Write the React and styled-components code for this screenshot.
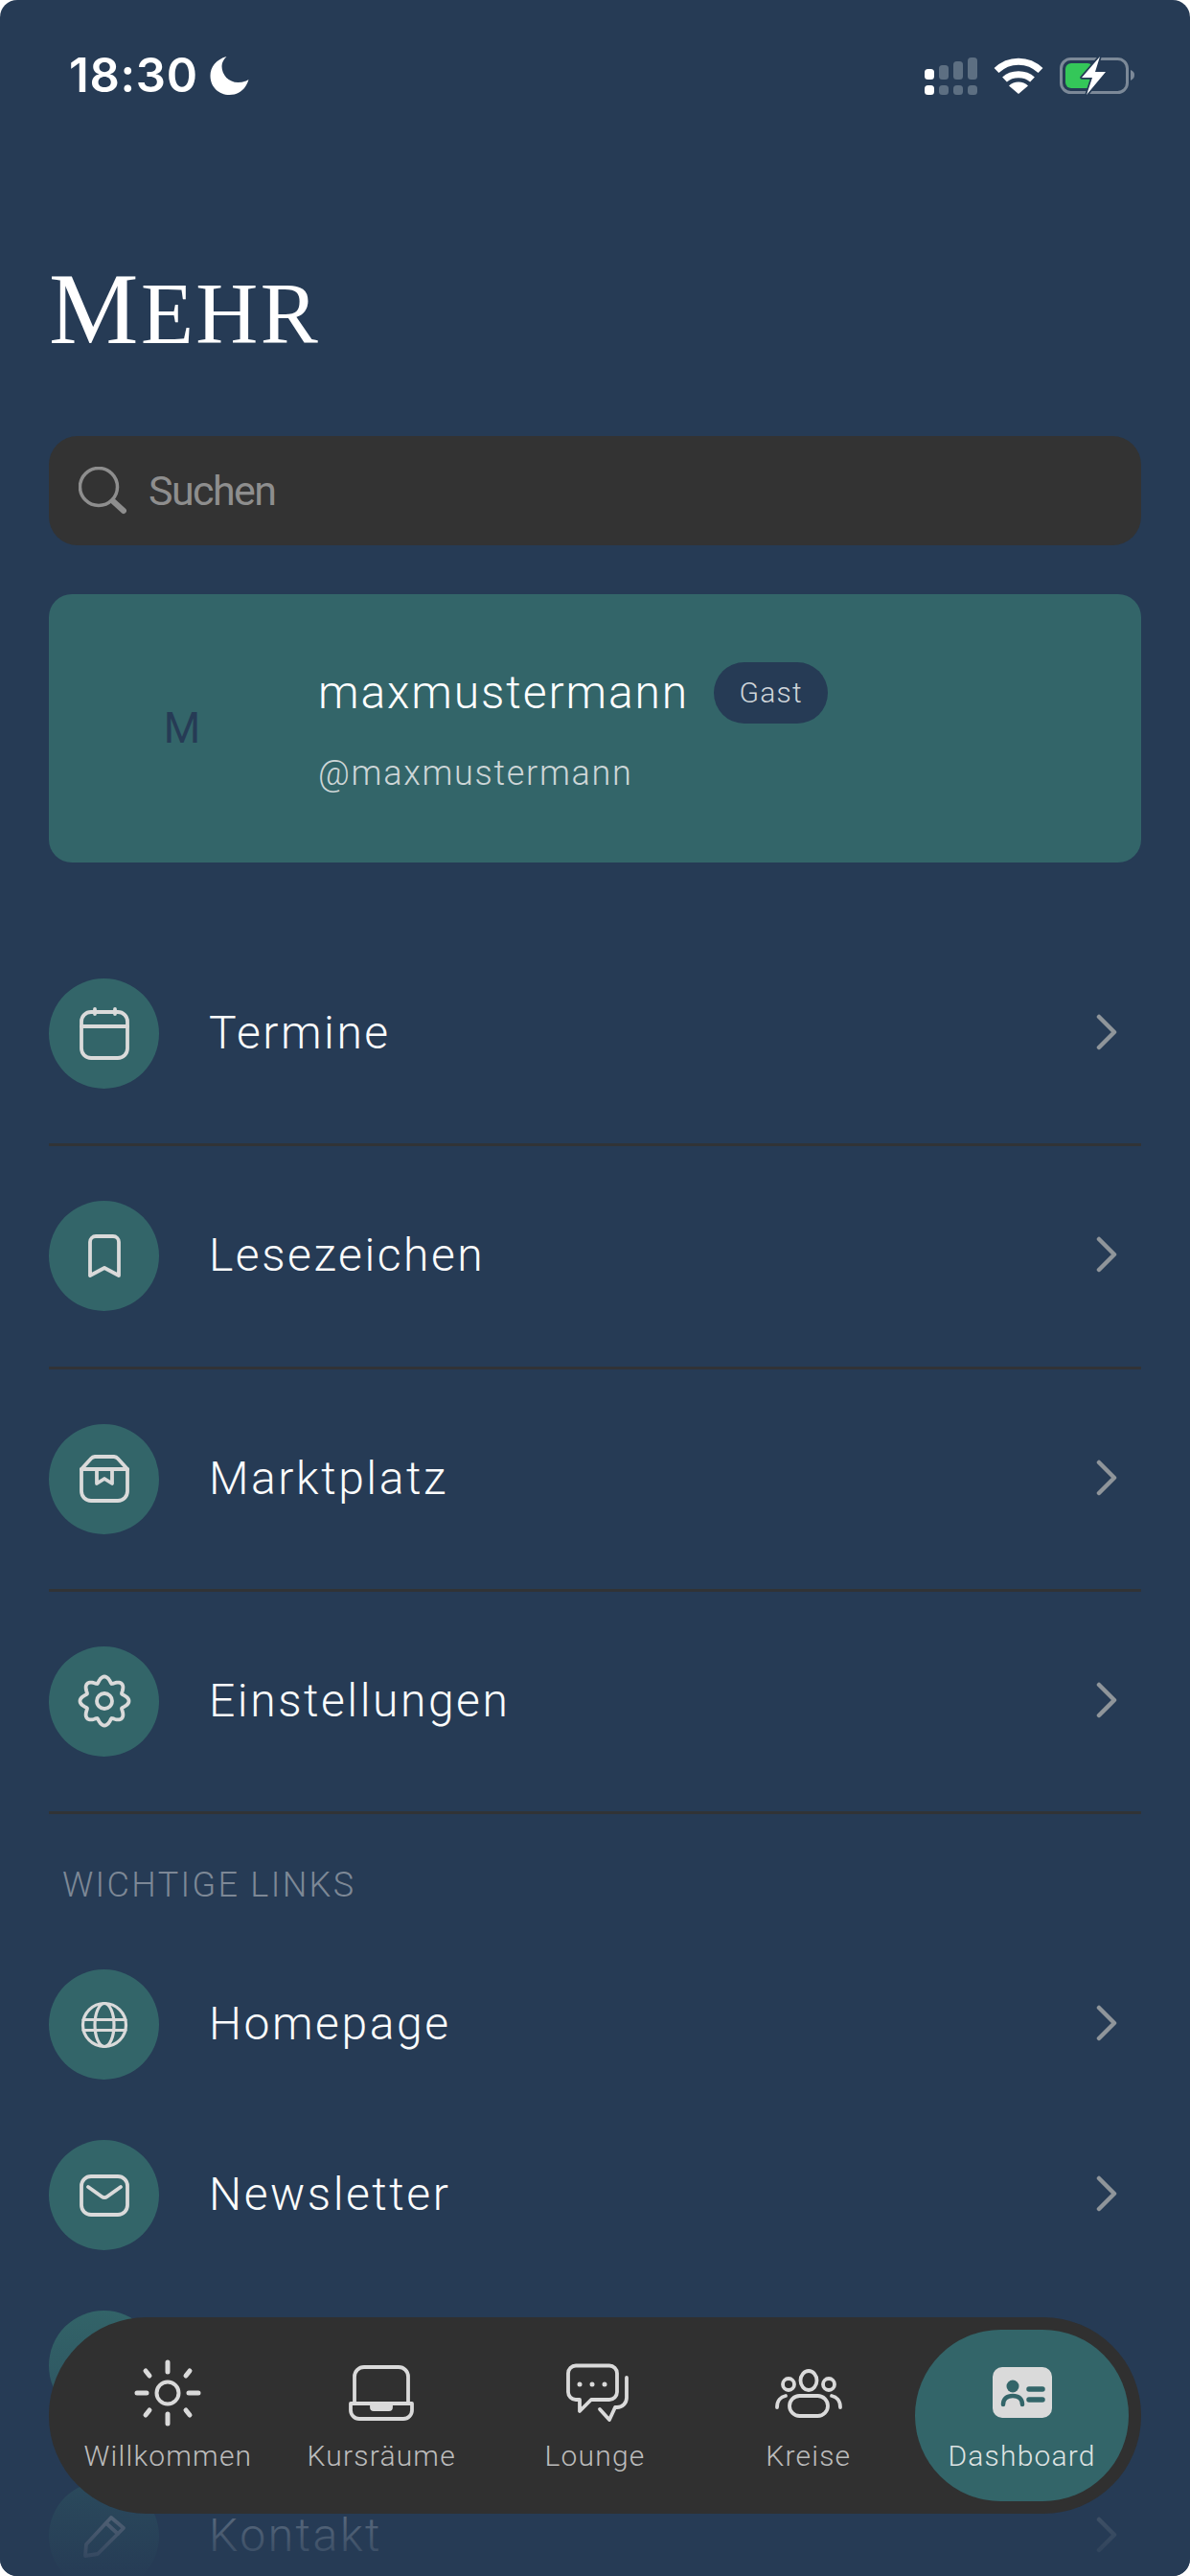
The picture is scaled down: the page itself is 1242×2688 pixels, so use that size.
import React from "react";
import styled, { createGlobalStyle } from "styled-components";

const NAVY = "#263b55";
const TEAL = "#336569";
const CHARCOAL = "#303030";
const ICON = "#dadada";

const Global = createGlobalStyle`
  html, body { margin: 0; padding: 0; background: #fff; }
  body { font-family: Roboto, "Liberation Sans", sans-serif; }
`;

const Screen = styled.div`
  position: relative;
  width: 1242px;
  height: 2688px;
  background: ${NAVY};
  border-radius: 18px;
  overflow: hidden;
`;

const StatusBar = styled.div`
  display: flex;
  align-items: center;
  justify-content: space-between;
  height: 40px;
  padding: 59px 57px 0 72px;
`;

const Clock = styled.div`
  display: flex;
  align-items: center;
  gap: 12px;
  color: #fff;
  font: 600 49px/40px Inter, "Liberation Sans", sans-serif;
  letter-spacing: 0.7px;
`;

const StatusIcons = styled.div`
  display: flex;
  align-items: center;
  gap: 17px;
`;

const Content = styled.main`
  display: flex;
  flex-direction: column;
  padding: 0 51px;
`;

const Title = styled.h1`
  margin: 170px 0 0;
  height: 186px;
  color: #fff;
  font: 400 90px/108px "Liberation Serif", serif;
  letter-spacing: 2.5px;
  text-transform: uppercase;
  &::first-letter { font-size: 105px; }
`;

const Search = styled.div`
  display: flex;
  align-items: center;
  gap: 23px;
  height: 114px;
  padding: 0 31px;
  background: #333333;
  border-radius: 30px;
  color: #8e8e8e;
  font: 400 43px/1 Roboto, sans-serif;
  letter-spacing: -1.6px;
`;

const ProfileCard = styled.section`
  display: flex;
  align-items: center;
  gap: 72px;
  height: 280px;
  margin: 51px 0 121px;
  padding-left: 69px;
  background: ${TEAL};
  border-radius: 24px;
`;

const Avatar = styled.div`
  display: flex;
  align-items: center;
  justify-content: center;
  width: 140px;
  height: 140px;
  color: ${NAVY};
  font: 400 44px/1 Roboto, sans-serif;
`;

const ProfileText = styled.div`
  display: flex;
  flex-direction: column;
  gap: 30px;
`;

const NameLine = styled.div`
  display: flex;
  align-items: center;
  gap: 26px;
  height: 64px;
  color: #fff;
  font: 290 48px/64px Roboto, sans-serif;
  letter-spacing: 1.9px;
`;

const RoleChip = styled.span`
  display: inline-flex;
  align-items: center;
  justify-content: center;
  width: 119px;
  height: 64px;
  background: ${NAVY};
  border-radius: 32px;
  color: #cfd5da;
  font: 300 30px/1 Roboto, sans-serif;
  letter-spacing: 1.2px;
`;

const Handle = styled.div`
  color: #cdd6d7;
  font: 290 36px/44px Roboto, sans-serif;
  letter-spacing: 1.7px;
`;

const Row = styled.div`
  display: flex;
  align-items: center;
  gap: 52px;
  padding-right: 24px;
  ${(p) =>
    p.$divided
      ? `padding-bottom: 57.33px; margin-bottom: 57px; border-bottom: 3px solid #313336;`
      : `margin-bottom: 63px;`}
`;

const Bubble = styled.span`
  display: flex;
  flex: none;
  align-items: center;
  justify-content: center;
  width: 115px;
  height: 115px;
  border-radius: 50%;
  background: ${TEAL};
  color: ${ICON};
`;

const RowLabel = styled.span`
  flex: 1;
  padding-bottom: 1px;
  color: #fbfcfc;
  font: 290 48px/1 Roboto, sans-serif;
  letter-spacing: 2.55px;
`;

const RowChevron = styled.svg`
  flex: none;
  margin-bottom: 3px;
`;

const SectionLabel = styled.div`
  margin: -5px 0 66px 14px;
  color: #7d8896;
  font: 300 36px/44px Roboto, sans-serif;
  letter-spacing: 2.35px;
`;

const BottomFade = styled.div`
  position: absolute;
  left: 0;
  right: 0;
  bottom: 0;
  height: 288px;
  background: linear-gradient(to bottom, rgba(38, 59, 85, 0), rgba(38, 59, 85, 0.98));
`;

const TabBar = styled.nav`
  position: absolute;
  left: 51px;
  right: 51px;
  top: 2418px;
  display: grid;
  grid-template-columns: repeat(5, 1fr);
  height: 205px;
  padding: 13px;
  box-sizing: border-box;
  background: ${CHARCOAL};
  border-radius: 102px;
`;

const Tab = styled.div`
  display: flex;
  flex-direction: column;
  align-items: center;
  gap: 10px;
  padding-top: 30px;
  border-radius: 90px;
  color: ${(p) => (p.$active ? "#dfe3e3" : "#bcbcbc")};
  background: ${(p) => (p.$active ? TEAL : "transparent")};
  font: ${(p) => (p.$active ? 360 : 300)} 30px/40px Roboto, sans-serif;
  letter-spacing: 1.2px;
`;

const TabIcon = styled.span`
  display: flex;
  align-items: center;
  justify-content: center;
  height: 72px;
  color: ${ICON};
`;

const line = { fill: "none", stroke: "currentColor", strokeWidth: 3.8, strokeLinecap: "round", strokeLinejoin: "round" };

// Eight rounded teeth traced around the hub in polar coordinates.
const gearOutline = Array.from({ length: 160 }, (_, i) => {
  const angle = (i / 160) * Math.PI * 2;
  const wave = (Math.cos(angle * 8) + 1) / 2;
  const radius = 19.5 + 6 * Math.pow(wave, 0.7);
  const x = 28 + radius * Math.sin(angle);
  const y = 28 - radius * Math.cos(angle);
  return `${x.toFixed(2)} ${y.toFixed(2)}`;
}).join("L");

const CalendarIcon = () => (
  <svg width="54" height="56" viewBox="0 0 54 56" {...line}>
    <rect x="3" y="5" width="48" height="48" rx="10" />
    <path d="M3 20H51M17 2V7M38 2V7" />
  </svg>
);
const BookmarkIcon = () => (
  <svg width="36" height="48" viewBox="0 0 36 48" {...line}>
    <path d="M3 44V9a6 6 0 0 1 6-6H27a6 6 0 0 1 6 6V44L18 36Z" />
  </svg>
);
const BoxIcon = () => (
  <svg width="54" height="52" viewBox="0 0 54 52" {...line}>
    <path d="M3 16H51V39a10 10 0 0 1-10 10H13A10 10 0 0 1 3 39Z" />
    <path d="M3 16L13 5a6 6 0 0 1 4-2H37a6 6 0 0 1 4 2L51 16" />
    <path d="M19 16V31L27 26L35 31V16" />
  </svg>
);
const GearIcon = () => (
  <svg width="56" height="56" viewBox="0 0 56 56" {...line}>
    <path d={`M${gearOutline}Z`} />
    <circle cx="28" cy="28" r="8" />
  </svg>
);
const GlobeIcon = () => (
  <svg width="50" height="50" viewBox="0 0 50 50" {...line} strokeWidth="3.2">
    <circle cx="25" cy="25" r="22.5" />
    <ellipse cx="25" cy="25" rx="10" ry="22.5" />
    <path d="M3 19.5H47M3 30.5H47" />
  </svg>
);
const MailIcon = () => (
  <svg width="54" height="46" viewBox="0 0 54 46" {...line}>
    <rect x="3" y="3" width="48" height="40" rx="10" />
    <path d="M10 14L24 24a5 5 0 0 0 6 0L44 14" />
  </svg>
);
const PencilIcon = () => (
  <svg width="46" height="46" viewBox="0 0 46 46" {...line}>
    <path d="M3 43L4 31L30 3L43 14L16 41Z" />
    <path d="M25 9L37 20" />
  </svg>
);
const Chevron = () => (
  <RowChevron width="24" height="38" viewBox="0 0 24 38" fill="none" stroke="#8f959a" strokeWidth="4.5" strokeLinecap="round" strokeLinejoin="round">
    <path d="M4 3L20 19L4 35" />
  </RowChevron>
);
const SearchGlyph = () => (
  <svg width="50" height="50" viewBox="0 0 50 50" fill="none" stroke="currentColor" strokeLinecap="round">
    <circle cx="21" cy="21" r="19.5" strokeWidth="3.5" />
    <path d="M36 36L47 46" strokeWidth="6" />
  </svg>
);
const SunIcon = () => (
  <svg width="70" height="70" viewBox="0 0 70 70" fill="none" stroke="currentColor" strokeLinecap="round">
    <circle cx="35" cy="35" r="11.5" strokeWidth="4" />
    <path d="M35 3V13M35 57V67M3 35H13M57 35H67M12 12L16 17M58 12L54 17M12 58L16 53M58 58L54 53" strokeWidth="5" />
  </svg>
);
const LaptopIcon = () => (
  <svg width="70" height="60" viewBox="0 0 70 60" {...line}>
    <path d="M7 41V13a10 10 0 0 1 10-10H53a10 10 0 0 1 10 10V41" />
    <path d="M3 41H67V48a9 9 0 0 1-9 9H12a9 9 0 0 1-9-9Z" />
    <rect x="25" y="41" width="20" height="6" rx="2" fill="currentColor" />
  </svg>
);
const ChatIcon = () => (
  <svg width="74" height="62" viewBox="-6 0 74 62" {...line}>
    <path d="M11 2.5H46a8 8 0 0 1 8 8V30a8 8 0 0 1-8 8H27L15 50V38H11a8 8 0 0 1-8-8V10.5a8 8 0 0 1 8-8Z" />
    <path d="M64 15V36a10 10 0 0 1-10 10H52L46 59L36 48" />
    <g fill="currentColor" stroke="none">
      <circle cx="15" cy="22" r="2.5" />
      <circle cx="28" cy="22" r="2.5" />
      <circle cx="41" cy="22" r="2.5" />
    </g>
  </svg>
);
const GroupIcon = () => (
  <svg width="72" height="52" viewBox="0 0 72 52" {...line}>
    <ellipse cx="36" cy="13" rx="8.5" ry="10" />
    <circle cx="15" cy="17" r="6" />
    <circle cx="57" cy="17" r="6" />
    <rect x="16" y="29" width="40" height="21" rx="10.5" />
    <path d="M3 41C3 34 7 30 12 29M69 41C69 34 65 30 60 29" />
  </svg>
);
const IdCardIcon = () => (
  <svg width="62" height="54" viewBox="0 0 62 54">
    <rect width="62" height="53" rx="10" fill="currentColor" />
    <circle cx="21" cy="20" r="6.5" fill={TEAL} />
    <path d="M11 39C11 33 15 30 21 30C27 30 31 33 31 39" fill="none" stroke={TEAL} strokeWidth="4.5" strokeLinecap="round" />
    <path d="M38 23H52M38 34H52" stroke={TEAL} strokeWidth="5.5" strokeLinecap="round" />
  </svg>
);
const MoonIcon = () => (
  <svg width="41" height="40" viewBox="0 0 40 40" fill="#fff">
    <path d="M17 0C6 3 0 11 0 20C0 32 9 40 20 40C30 40 37 34 40 24C37 26 33 27 29 27C19 27 12 19 12 10C12 6 14 3 17 0Z" />
  </svg>
);
const SignalIcon = () => {
  const dim = "#5d6f82";
  return (
    <svg width="55" height="39" viewBox="0 0 55 39">
      <rect x="0" y="12" width="10" height="11" rx="3.5" fill="#fff" />
      <rect x="15" y="8" width="10" height="15" rx="3.5" fill={dim} />
      <rect x="30" y="4" width="10" height="19" rx="3.5" fill={dim} />
      <rect x="45" y="0" width="10" height="23" rx="3.5" fill={dim} />
      <rect x="0" y="29" width="10" height="10" rx="3.5" fill="#fff" />
      <rect x="15" y="29" width="10" height="10" rx="3.5" fill={dim} />
      <rect x="30" y="29" width="10" height="10" rx="3.5" fill={dim} />
      <rect x="45" y="29" width="10" height="10" rx="3.5" fill={dim} />
    </svg>
  );
};
const WifiIcon = () => (
  <svg width="52" height="38" viewBox="0 0 52 38" fill="none" stroke="#fff" strokeWidth="7">
    <path d="M3 13.5C16 1 36 1 49 13.5" />
    <path d="M11.5 23C19 16 33 16 40.5 23" />
    <path d="M16 29.5C21 24 31 24 36 29.5L26 38Z" fill="#fff" stroke="none" />
  </svg>
);
const BatteryIcon = () => (
  <svg width="79" height="42" viewBox="0 -2 79 42">
    <rect x="1.5" y="1.5" width="69" height="35" rx="10" fill="none" stroke="#7c8998" strokeWidth="3" />
    <path d="M74 13C77 14 78 16 78 18C78 21 77 22 74 24Z" fill="#7c8998" />
    <rect x="6" y="6" width="29" height="26" rx="6" fill="#34c759" />
    <path d="M42 -1L23 21H34L28 39L48 15H37Z" fill="#fff" stroke={NAVY} strokeWidth="3.5" paintOrder="stroke" strokeLinejoin="round" />
  </svg>
);

const primaryLinks = [
  { label: "Termine", icon: <CalendarIcon /> },
  { label: "Lesezeichen", icon: <BookmarkIcon /> },
  { label: "Marktplatz", icon: <BoxIcon /> },
  { label: "Einstellungen", icon: <GearIcon /> },
];

const importantLinks = [
  { label: "Homepage", icon: <GlobeIcon /> },
  { label: "Newsletter", icon: <MailIcon /> },
  { label: "", icon: null },
  { label: "Kontakt", icon: <PencilIcon /> },
];

const tabs = [
  { label: "Willkommen", icon: <SunIcon /> },
  { label: "Kursräume", icon: <LaptopIcon /> },
  { label: "Lounge", icon: <ChatIcon /> },
  { label: "Kreise", icon: <GroupIcon /> },
  { label: "Dashboard", icon: <IdCardIcon />, active: true },
];

export default function App() {
  return (
    <Screen>
      <Global />
      <StatusBar>
        <Clock>
          18:30
          <MoonIcon />
        </Clock>
        <StatusIcons>
          <SignalIcon />
          <WifiIcon />
          <BatteryIcon />
        </StatusIcons>
      </StatusBar>
      <Content>
        <Title>Mehr</Title>
        <Search>
          <SearchGlyph />
          Suchen
        </Search>
        <ProfileCard>
          <Avatar>M</Avatar>
          <ProfileText>
            <NameLine>
              maxmustermann
              <RoleChip>Gast</RoleChip>
            </NameLine>
            <Handle>@maxmustermann</Handle>
          </ProfileText>
        </ProfileCard>
        {primaryLinks.map((item) => (
          <Row key={item.label} $divided>
            <Bubble>{item.icon}</Bubble>
            <RowLabel>{item.label}</RowLabel>
            <Chevron />
          </Row>
        ))}
        <SectionLabel>WICHTIGE LINKS</SectionLabel>
        {importantLinks.map((item) => (
          <Row key={item.label}>
            <Bubble>{item.icon}</Bubble>
            <RowLabel>{item.label}</RowLabel>
            <Chevron />
          </Row>
        ))}
      </Content>
      <BottomFade />
      <TabBar>
        {tabs.map((tab) => (
          <Tab key={tab.label} $active={tab.active}>
            <TabIcon>{tab.icon}</TabIcon>
            {tab.label}
          </Tab>
        ))}
      </TabBar>
    </Screen>
  );
}
